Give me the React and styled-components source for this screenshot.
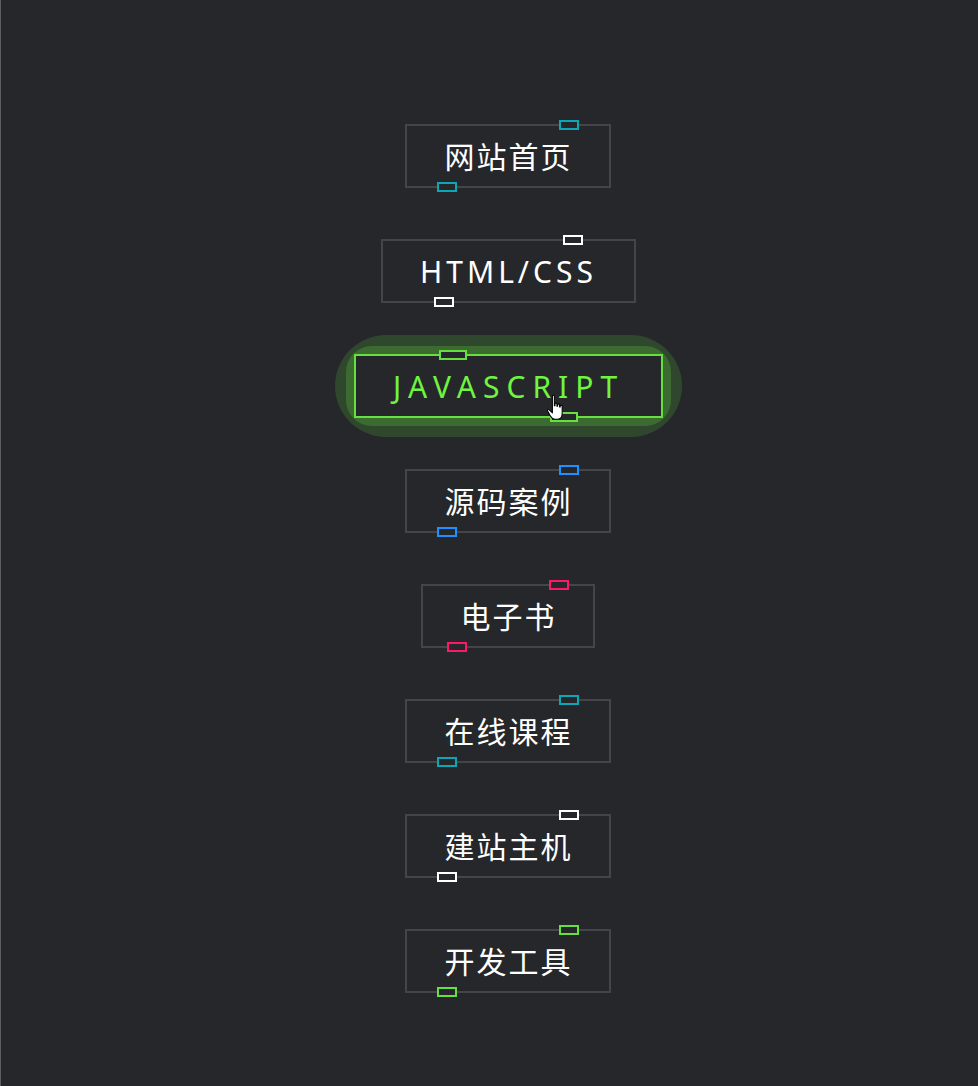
import styled, { createGlobalStyle } from 'styled-components';

const GlobalStyle = createGlobalStyle`
  html {
    background: #25272b;
  }
  body {
    margin: 0;
    padding: 0;
    min-height: 1086px;
    border-left: 1px solid #5c5e62;
    box-sizing: border-box;
    font-family: "Noto Sans", "Noto Sans CJK SC", sans-serif;
  }
`

const Page = styled.div`
   min-height: 1086px;
   box-sizing: border-box;
   padding: 124px 0 0 38px;
   display: flex;
   justify-content: center;
`

const Menu = styled.ul`
   list-style: none;
   margin: 0;
   padding: 0;
   display: flex;
   flex-direction: column;
   align-items: center;
   gap: 51px;
`

const Item = styled.li`
   position: relative;
   display: flex;
   align-items: center;
   height: 64px;
   box-sizing: border-box;
   padding: 2px 37px 0;
   border: 2px solid ${p => p.$active ? p.$clr : '#444548'};
   background: #25272b;
   color: ${p => p.$active ? '#70f440' : '#ffffff'};
   font-size: 30px;
   letter-spacing: ${p => p.$active ? '7px' : p.$track};
   line-height: 1;
   cursor: pointer;
`

const Marker = styled.span`
   position: absolute;
   width: ${p => p.$active ? '24px' : '16px'};
   height: 6px;
   border: 2px solid ${p => p.$clr};
   background: #25272b;

   &.top {
    top: -6px;
    ${p => p.$active ? 'left: 83px;' : `right: ${p.$offset};`}
   }

   &.bottom {
    bottom: -6px;
    ${p => p.$active ? 'right: 83px;' : `left: ${p.$offset};`}
   }
`

const Halo = styled.span`
   position: absolute;
   inset: -21px;
   border-radius: 52px;
   background: rgba(110, 255, 62, 0.15);
   z-index: -1;

   &::before {
    content: '';
    position: absolute;
    inset: 11px;
    border-radius: 26px;
    background: rgba(110, 255, 62, 0.2);
   }
`

const Cursor = styled.svg`
   position: absolute;
   left: 190px;
   top: 38px;
`

const items = [
  { text: '网站首页', clr: '#0ea5b7' },
  { text: 'HTML/CSS', clr: '#ffffff', track: '4px', offset: '51px' },
  { text: 'JAVASCRIPT', clr: '#66e03f', active: true },
  { text: '源码案例', clr: '#1e90ff' },
  { text: '电子书', clr: '#ff1867', offset: '24px' },
  { text: '在线课程', clr: '#0ea5b7' },
  { text: '建站主机', clr: '#ffffff' },
  { text: '开发工具', clr: '#66e03f' },
]

function HandCursor() {
  return (
    <Cursor width="18" height="26" viewBox="0 0 13 20">
      <path
        d="M4.5 1.5 C4.5 0.7 6 0.7 6 1.5 L6 9 L6.5 9 L6.5 7.5 C6.5 6.8 8 6.8 8 7.5 L8 9.5 L8.5 9.5 L8.5 8.3 C8.5 7.6 10 7.6 10 8.3 L10 10 L10.5 10 L10.5 9.2 C10.5 8.5 12 8.5 12 9.2 L12 15 C12 17.5 10.5 19.5 8 19.5 L6.5 19.5 C4.8 19.5 4 18.7 3 17 L0.8 13 C0.4 12.2 1.3 11.5 2 12.2 L4.5 14.5 Z"
        fill="#ffffff"
        stroke="#000000"
        strokeWidth="0.8"
        strokeLinejoin="round"
      />
    </Cursor>
  )
}

export default function App() {
  return (
    <Page>
      <GlobalStyle />
      <Menu>
        {items.map(item => (
          <Item key={item.text} $clr={item.clr} $active={item.active} $track={item.track || '2px'}>
            {item.active ? <Halo /> : null}
            {item.text}
            <Marker className='top' $clr={item.clr} $active={item.active} $offset={item.offset || '30px'} />
            <Marker className='bottom' $clr={item.clr} $active={item.active} $offset={item.offset || '30px'} />
            {item.active ? <HandCursor /> : null}
          </Item>
        ))}
      </Menu>
    </Page>
  )
}
